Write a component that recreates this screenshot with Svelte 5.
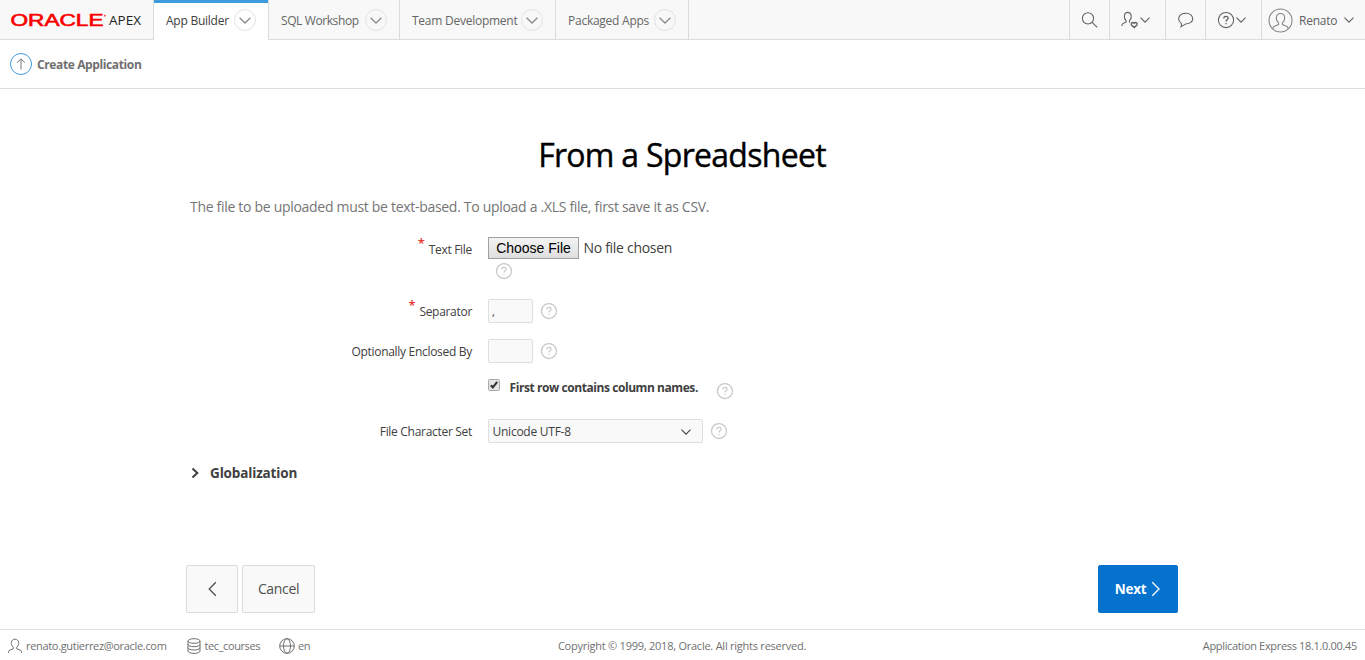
<script>
  const tabs = [
    { label: 'App Builder', width: 115, active: true },
    { label: 'SQL Workshop', width: 131 },
    { label: 'Team Development', width: 156 },
    { label: 'Packaged Apps', width: 133 }
  ];
</script>

{#snippet help()}
  <svg class="help" width="18" height="18" viewBox="0 0 18 18" aria-label="Help">
    <circle cx="9" cy="9" r="7.5" />
    <path d="M6.8 7.4C6.8 4.7 11.1 4.8 11.1 7.2C11.1 8.8 9 8.8 9 10.6M9 11.9V13.1" />
  </svg>
{/snippet}

{#snippet chevron(w = 10, h = 6)}
  <svg class="chev" width={w} height={h} viewBox="0 0 10 6" preserveAspectRatio="none"><path d="M.5 .6L5 5.2L9.5 .6" /></svg>
{/snippet}

<div class="page">
  <header>
    <div class="logo">
      <svg width="153" height="39" viewBox="0 0 153 39">
        <text class="oracle" x="10.5" y="25.5" textLength="93" lengthAdjust="spacingAndGlyphs">ORACLE</text>
        <circle cx="104.8" cy="15.7" r=".9" fill="#f33" />
        <text class="apex" x="109" y="25.4" textLength="32" lengthAdjust="spacingAndGlyphs">APEX</text>
      </svg>
    </div>
    <nav>
      {#each tabs as tab}
        <div class="tab" class:active={tab.active} style="width:{tab.width}px">
          <span>{tab.label}</span>
          <i>{@render chevron(12, 7)}</i>
        </div>
      {/each}
    </nav>
    <div class="tools">
      <div class="tool w40">
        <svg width="18" height="18" viewBox="0 0 18 18"><circle cx="7" cy="7.3" r="5.6" /><path d="M11.1 11.4L16.2 16.3" /></svg>
      </div>
      <div class="tool w56">
        <svg width="18" height="18" viewBox="0 0 18 18"><path d="M1 15V14Q1 12.7 2.5 12.2L5.2 11V9.8C2.2 7.2 2.9 1.4 6.8 1.4S11.4 7.2 8.4 9.8V11L9.2 11.4" /><path d="M13.2 16.6L10.7 14.2C9.3 12.2 11.9 10.7 13.2 12.4C14.5 10.7 17.1 12.2 15.7 14.2Z" stroke-width="1.4" /></svg>
        {@render chevron(10, 6)}
      </div>
      <div class="tool w40">
        <svg width="18" height="18" viewBox="0 0 18 18"><path d="M4.1 12.2C-.3 8.8 1.4 2.3 9.2 2.3S18.8 12.7 8.8 12.9L4.1 15.6Q5 13.7 4.1 12.2Z" /></svg>
      </div>
      <div class="tool w56">
        <svg width="18" height="18" viewBox="0 0 18 18"><circle cx="9" cy="9" r="7.6" /><path d="M6.8 7.4C6.8 4.7 11.1 4.8 11.1 7.2C11.1 8.8 9 8.8 9 10.6M9 12V13.2" stroke-width="1.3" /></svg>
        {@render chevron(10, 6)}
      </div>
      <div class="tool user">
        <svg class="avatar" width="25" height="25" viewBox="0 0 25 25"><circle cx="12.5" cy="12.5" r="11.5" /><path d="M5 21V19.8Q5 18.6 7 17.9L10.6 16.6V14.8C6.9 11.5 7.8 5.5 12.5 5.5S18.1 11.5 14.4 14.8V16.6L18 17.9Q20 18.6 20 19.8V21" /></svg>
        <span>Renato</span>
        {@render chevron(10, 6)}
      </div>
    </div>
  </header>

  <div class="crumb">
    <svg width="24" height="24" viewBox="0 0 24 24">
      <circle cx="12" cy="12" r="10.5" fill="none" stroke="#3e9be0" />
      <path d="M12 17.5V7M8 10.8L12 6.8L16 10.8" fill="none" stroke="#777" />
    </svg>
    <strong>Create Application</strong>
  </div>

  <main>
    <h1>From a Spreadsheet</h1>
    <p class="intro">The file to be uploaded must be text-based. To upload a .XLS file, first save it as CSV.</p>

    <div class="row file">
      <div class="label"><b>*</b><span>Text File</span></div>
      <div class="field">
        <div class="picker"><button class="choose">Choose File</button><span>No file chosen</span></div>
        {@render help()}
      </div>
    </div>
    <div class="row">
      <div class="label"><b>*</b><span>Separator</span></div>
      <div class="field"><div class="input comma">,</div>{@render help()}</div>
    </div>
    <div class="row">
      <div class="label"><span>Optionally Enclosed By</span></div>
      <div class="field"><div class="input"></div>{@render help()}</div>
    </div>
    <div class="row">
      <div class="label"></div>
      <div class="field check">
        <svg class="box" width="12" height="12" viewBox="0 0 12 12">
          <rect x=".5" y=".5" width="11" height="11" rx="1" fill="#e5e5e5" stroke="#aaa" />
          <path d="M2.8 6.3L4.8 8.4L9.2 2.8" fill="none" stroke="#333" stroke-width="2.1" />
        </svg>
        <strong>First row contains column names.</strong>
        {@render help()}
      </div>
    </div>
    <div class="row">
      <div class="label"><span>File Character Set</span></div>
      <div class="field"><div class="select"><span>Unicode UTF-8</span>{@render chevron(10, 6)}</div>{@render help()}</div>
    </div>

    <div class="global">
      <svg width="9" height="12" viewBox="0 0 9 12"><path d="M1.5 1.5L6.3 6L1.5 10.5" fill="none" stroke="#404040" stroke-width="2" /></svg>
      <strong>Globalization</strong>
    </div>
  </main>

  <div class="actions">
    <button class="btn back" aria-label="Back"><svg width="10" height="16" viewBox="0 0 10 16"><path d="M8.8 1.3L2.2 8L8.8 14.7" /></svg></button>
    <button class="btn cancel">Cancel</button>
    <button class="btn next"><span>Next</span><svg width="10" height="16" viewBox="0 0 10 16"><path d="M1.3 1.3L8 8L1.3 14.7" /></svg></button>
  </div>

  <footer>
    <div class="session">
      <svg width="16" height="16" viewBox="0 0 16 16"><path d="M1.5 14.8V13.7Q1.5 12.6 3 12.1L6.3 10.8V9.2C3 6.5 3.8 1.2 8 1.2S13 6.5 9.7 9.2V10.8L13 12.1Q14.5 12.6 14.5 13.7V14.8" /></svg>
      <span class="mail">renato.gutierrez@oracle.com</span>
      <svg width="16" height="16" viewBox="0 0 16 16"><ellipse cx="8" cy="3" rx="6" ry="2.3" /><path d="M2 3V13C2 16.2 14 16.2 14 13V3M2 6.3C2 9.5 14 9.5 14 6.3M2 9.6C2 12.8 14 12.8 14 9.6" /></svg>
      <span class="space">tec_courses</span>
      <svg width="16" height="16" viewBox="0 0 16 16"><circle cx="8" cy="8" r="7.3" /><ellipse cx="8" cy="8" rx="3.5" ry="7.3" /><path d="M.7 8H15.3" /></svg>
      <span>en</span>
    </div>
    <div class="copy">Copyright © 1999, 2018, Oracle. All rights reserved.</div>
    <div class="version">Application Express 18.1.0.00.45</div>
  </footer>
</div>

<style>
  :global(body) { margin: 0; background: #fff; }
  * { box-sizing: border-box; }
  .page { width: 1365px; height: 660px; display: flex; flex-direction: column; overflow: hidden; background: #fff; color: #404040; font: 12px/16px "Open Sans", "Noto Sans", sans-serif; letter-spacing: -.25px; white-space: nowrap; }
  svg { display: block; flex: none; }
  button { font: inherit; letter-spacing: inherit; padding: 0; }
  header { height: 40px; flex: none; display: flex; background: #f8f8f8; box-shadow: inset 0 -1px #dcdcdc; }
  .logo { width: 153px; }
  .oracle { font: 16px "Liberation Sans", Arial, sans-serif; fill: #f80000; stroke: #f80000; stroke-width: .6; letter-spacing: 0; }
  .apex { font: 13.5px "Open Sans", sans-serif; fill: #222; letter-spacing: 0; }
  nav { display: flex; border-left: 1px solid #dcdcdc; }
  .tab { height: 40px; padding: 1px 12px 0; display: flex; align-items: center; justify-content: space-between; border-right: 1px solid #dcdcdc; color: #666; }
  .tab:nth-child(2) span { letter-spacing: -.4px; }
  .tab.active { background: #fff; color: #404040; box-shadow: inset 0 3px #3e9be0; }
  .tab i { width: 22px; height: 22px; border: 1px solid #e2e2e2; border-radius: 50%; display: flex; align-items: center; justify-content: center; margin-top: -1px; color: #8c8c8c; }
  .chev { fill: none; stroke: currentColor; stroke-width: 1.1; }
  .tools { margin-left: auto; display: flex; color: #606060; }
  .tool { border-left: 1px solid #dcdcdc; height: 40px; display: flex; align-items: center; justify-content: center; }
  .tool svg:not(.chev) { fill: none; stroke: currentColor; stroke-width: 1.05; }
  .w40 { width: 40px; }
  .w56 { width: 56px; gap: 1px; padding-right: 5px; }
  .user { width: 104px; justify-content: flex-start; padding-left: 6px; }
  .user span { margin: 1px 8px 0 6px; width: 37px; }
  .tool .avatar { color: #858585; }
  .crumb { height: 49px; flex: none; display: flex; align-items: center; padding-left: 9px; gap: 4px; border-bottom: 1px solid #dfdfdf; color: #707070; letter-spacing: -.38px; }
  .crumb strong { margin-top: 1px; }
  main { width: 986px; margin-left: 190px; height: 476px; flex: none; }
  h1 { margin: 44px 2px 0 0; height: 44px; font-size: 32px; line-height: 44px; font-weight: 400; -webkit-text-stroke: .4px #000; color: #000; text-align: center; letter-spacing: -.72px; }
  .intro { margin: 20px 0 22px; height: 20px; font-size: 14px; line-height: 20px; color: #757575; letter-spacing: -.3px; }
  .row { display: flex; height: 40px; align-items: center; }
  .row.file { height: 52px; align-items: flex-start; }
  .label { width: 282px; margin-right: 16px; display: flex; justify-content: flex-end; padding-top: 1px; letter-spacing: -.3px; }
  .label b { color: #e53935; font-size: 13px; font-weight: 600; margin: -7px 4px 0 0; }
  .file .label { padding-top: 3px; }
  .field { display: flex; align-items: center; }
  .file .field { display: block; }
  .picker { display: flex; align-items: center; font-size: 14px; line-height: 20px; height: 22px; margin-top: -2px; letter-spacing: -.3px; }
  .choose { width: 91px; height: 22px; border: 1px solid #a0a0a0; background: linear-gradient(#f4f4f4, #dedede); font: 14px/18px "Liberation Sans", Arial, sans-serif; letter-spacing: 0; color: #000; margin-right: 4.5px; }
  .help { fill: none; stroke: #c8c8c8; stroke-width: 1.25; margin-left: 7.4px; }
  .file .help { margin-top: 3px; }
  .input, .select { height: 24px; width: 45px; border: 1px solid #dfdfdf; background: #f9f9f9; border-radius: 2px; padding: 4px; line-height: 16px; }
  .comma { font-size: 11px; padding-left: 3px; }
  .select { width: 215px; display: flex; align-items: center; justify-content: space-between; padding: 5px 11px 3px 3.5px; }
  .select .chev { margin-top: -1px; }
  .check strong { margin: -6px 0 0 9.5px; width: 189.5px; letter-spacing: -.43px; }
  .box { margin-top: -12px; }
  .check .help { margin-left: 17.4px; }
  .global { display: flex; align-items: center; gap: 10px; margin-top: 12px; font-size: 13.5px; line-height: 20px; padding-left: 1px; letter-spacing: -.15px; }
  .actions { height: 64px; flex: none; display: flex; padding: 0 187px 0 186px; gap: 4px; }
  .btn { height: 48px; border: 1px solid #dadada; border-radius: 2px; background: #f9f9f9; display: flex; align-items: center; justify-content: center; color: #505050; font-size: 14px; }
  .btn svg { fill: none; stroke: currentColor; stroke-width: 1.3; }
  .back { width: 52px; }
  .cancel { width: 73px; letter-spacing: -.35px; }
  .next { width: 80px; margin-left: auto; background: #0572ce; border-color: #0572ce; color: #fff; font-weight: 700; gap: 5px; font-size: 13.5px; }
  footer { height: 31px; flex: none; border-top: 1px solid #dfdfdf; display: grid; grid-template-columns: 1fr auto 1fr; align-items: center; padding: 2px 8px 0 7px; color: #707070; font-size: 11px; letter-spacing: -.24px; }
  .session { display: flex; align-items: center; letter-spacing: -.32px; }
  .session svg { fill: none; stroke: currentColor; stroke-width: 1; margin-right: 3px; }
  .mail { width: 159.5px; }
  .space { width: 74.5px; letter-spacing: -.4px; }
  .version { text-align: right; letter-spacing: -.33px; }
</style>
